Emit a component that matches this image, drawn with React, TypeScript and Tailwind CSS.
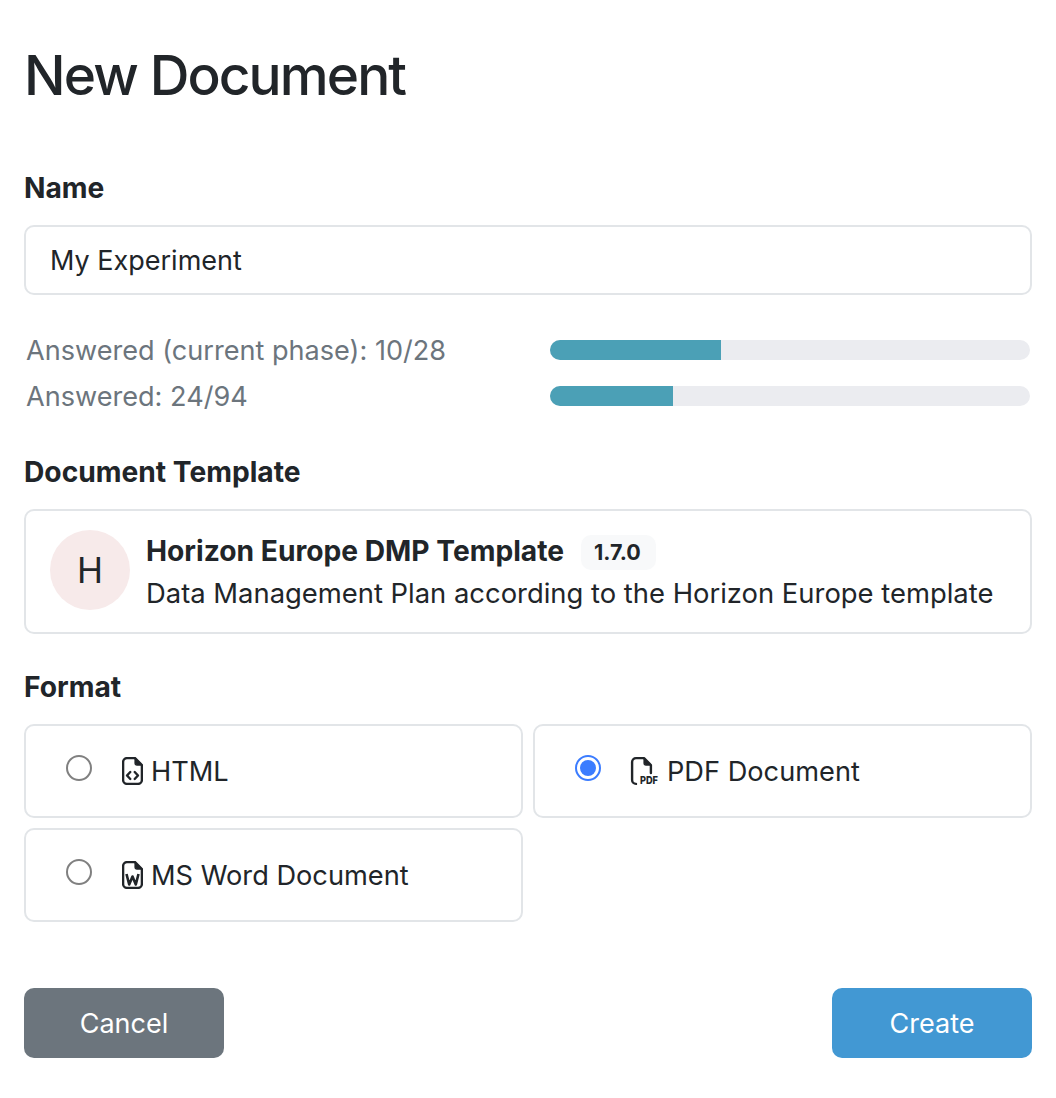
function FileIcon({ children }: { children: React.ReactNode }) {
  return (
    <svg width="21" height="28" viewBox="0 0 21 28" fill="none" className="shrink-0">
      <path
        d="M13 1.1H5A3.9 3.9 0 0 0 1.1 5v18A3.9 3.9 0 0 0 5 26.9h11a3.9 3.9 0 0 0 3.9-3.9V8z"
        stroke="#212529"
        strokeWidth="2.4"
        strokeLinejoin="round"
      />
      <path d="M13 1.1v5a2 2 0 0 0 2 2h4.9z" fill="#212529" stroke="#212529" strokeWidth="1.2" strokeLinejoin="round" />
      {children}
    </svg>
  );
}

function PdfIcon() {
  return (
    <svg width="28" height="28" viewBox="0 0 28 28" fill="none" className="shrink-0 overflow-visible">
      <path
        d="M1.1 23V5A3.9 3.9 0 0 1 5 1.1h8L19.9 8v8M1.1 23A3.9 3.9 0 0 0 5 26.9"
        stroke="#212529"
        strokeWidth="2.4"
        strokeLinecap="round"
        strokeLinejoin="round"
      />
      <path d="M13 1.1v5a2 2 0 0 0 2 2h4.9z" fill="#212529" stroke="#212529" strokeWidth="1.2" strokeLinejoin="round" />
      <text
        x="9"
        y="27"
        fontSize="11"
        fontWeight="800"
        fill="#212529"
        fontFamily="Inter, sans-serif"
        textLength="18"
        lengthAdjust="spacingAndGlyphs"
      >
        PDF
      </text>
    </svg>
  );
}

function Radio({ checked }: { checked?: boolean }) {
  return (
    <span
      className={`flex h-[26px] w-[26px] shrink-0 items-center justify-center rounded-full border-2 bg-white ${
        checked ? "border-[#3b7cff]" : "border-[#808080]"
      }`}
    >
      {checked && <span className="h-[16px] w-[16px] rounded-full bg-[#3b7cff]" />}
    </span>
  );
}

function FormatOption({
  label,
  icon,
  checked,
}: {
  label: string;
  icon: React.ReactNode;
  checked?: boolean;
}) {
  return (
    <div className="flex h-[94px] items-center rounded-[10px] border-2 border-[#e2e5e8] pl-[40px]">
      <span className="-mt-[6px]">
        <Radio checked={checked} />
      </span>
      <span className="ml-[30px] flex items-center gap-[8px]">
        {icon}
        <span className="pt-[2px] text-[27.2px] leading-[34px] text-[#212529]">{label}</span>
      </span>
    </div>
  );
}

function Progress({ label, value }: { label: string; value: string }) {
  return (
    <div className="flex h-[46px] items-center">
      <div className="w-[526px] pl-[2px] text-[27.1px] leading-[46px] text-[#6c757d]">{label}</div>
      <div className="-mt-[2px] h-[20px] w-[480px] overflow-hidden rounded-[10px] bg-[#ebecf0]">
        <div className="h-full bg-[#4ba0b6]" style={{ width: value }} />
      </div>
    </div>
  );
}

export default function App() {
  return (
    <div className="h-[1098px] bg-white px-[24px] pt-[41px] font-['Inter',sans-serif] text-[#212529]">
      <h1 className="text-[55px] leading-[68px] font-medium tracking-[-1.9px]">New Document</h1>

      <label className="mt-[62px] block text-[28.2px] leading-[34px] font-bold">Name</label>
      <div className="mt-[20px] flex h-[70px] items-center rounded-[10px] border-2 border-[#e2e5e8] px-[24px] pt-[2px] text-[27px]">
        My Experiment
      </div>

      <div className="mt-[33px]">
        <Progress label="Answered (current phase): 10/28" value="35.7%" />
        <Progress label="Answered: 24/94" value="25.6%" />
      </div>

      <label className="mt-[35px] block text-[28.2px] leading-[34px] font-bold">Document Template</label>
      <div className="mt-[20px] flex h-[125px] items-center rounded-[10px] border-2 border-[#e2e5e8] px-[24px]">
        <div className="-mt-[3px] flex h-[80px] w-[80px] shrink-0 items-center justify-center rounded-full bg-[#f7eaea] text-[35px]">
          H
        </div>
        <div className="ml-[16px]">
          <div className="flex items-center">
            <span className="text-[28.2px] leading-[42px] font-bold">Horizon Europe DMP Template</span>
            <span className="mt-[4px] ml-[17px] rounded-[10px] bg-[#f8f9fa] pt-[3px] pr-[15px] pb-[3px] pl-[13px] text-[21.5px] leading-[29px] font-bold">
              1.7.0
            </span>
          </div>
          <div className="text-[27.4px] leading-[42px] whitespace-nowrap">
            Data Management Plan according to the Horizon Europe template
          </div>
        </div>
      </div>

      <label className="mt-[36px] block text-[28.2px] leading-[34px] font-bold">Format</label>
      <div className="mt-[20px] grid grid-cols-2 gap-[10px]">
        <FormatOption
          label="HTML"
          icon={
            <FileIcon>
              <path d="M8.3 15l-3.3 3.5 3.3 3.5M12.7 15l3.3 3.5-3.3 3.5" stroke="#212529" strokeWidth="2.4" strokeLinecap="round" strokeLinejoin="round" />
            </FileIcon>
          }
        />
        <FormatOption label="PDF Document" checked icon={<PdfIcon />} />
        <FormatOption
          label="MS Word Document"
          icon={
            <FileIcon>
              <path d="M4.5 13l2.7 10.5 3.3-8 3.3 8L16.5 13" stroke="#212529" strokeWidth="2.6" strokeLinejoin="round" />
            </FileIcon>
          }
        />
      </div>

      <div className="mt-[66px] flex justify-between">
        <button className="h-[70px] w-[200px] rounded-[10px] bg-[#6c757d] pt-[2px] text-[27px] text-white">Cancel</button>
        <button className="h-[70px] w-[200px] rounded-[10px] bg-[#4298d3] pt-[2px] text-[27px] text-white">Create</button>
      </div>
    </div>
  );
}
